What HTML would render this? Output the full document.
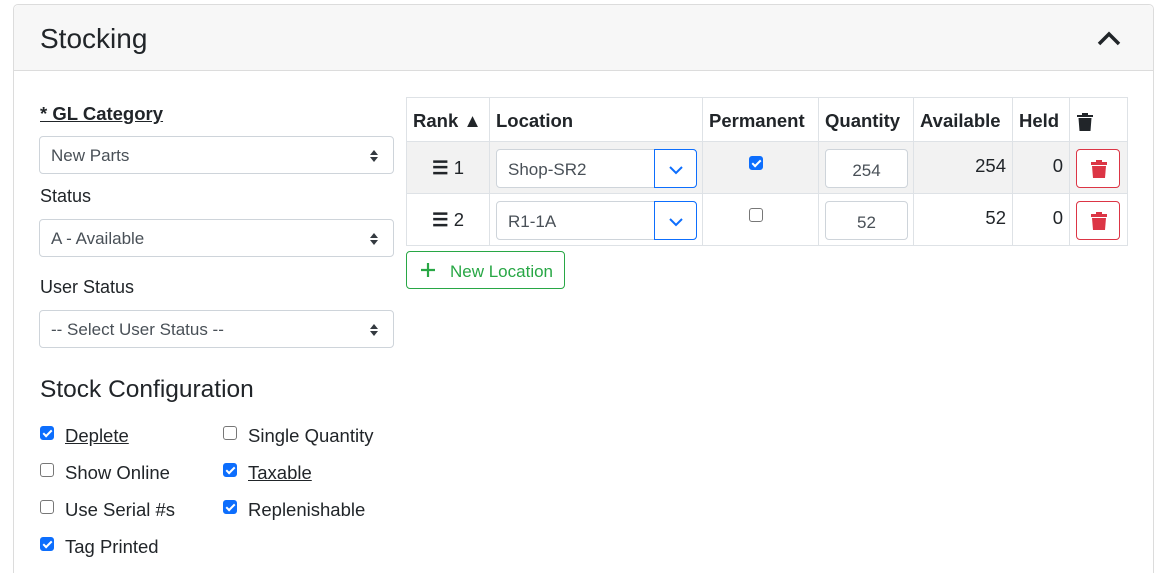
<!DOCTYPE html>
<html><head><style>
*{box-sizing:border-box;margin:0;padding:0}
html,body{width:1157px;height:573px;overflow:hidden}
body{background:#fff;font-family:"Liberation Sans",sans-serif;color:#212529;position:relative}
.a{position:absolute;white-space:nowrap}
.card{position:absolute;left:13px;top:4px;width:1141px;height:569px;border:1px solid #dcdcdc;border-bottom:none;border-radius:5px 5px 0 0}
.hdr{position:absolute;left:14px;top:5px;width:1139px;height:66px;background:#f7f7f7;border-bottom:1px solid #dcdcdc;border-radius:5px 5px 0 0}
.sel{position:absolute;left:39px;width:355px;height:38px;border:1px solid #ced4da;border-radius:4px;font-size:17px;color:#495057;padding:9px 11px}
.sel svg{position:absolute;right:14px;top:12px}
.lbl{font-size:18px}
.cb{position:absolute;width:14px;height:14px;border:1px solid #777;border-radius:3px;background:#fff}
.cb.on{background:#0d6efd;border-color:#0d6efd}
.cb.on::after{content:"";position:absolute;left:4px;top:1px;width:3px;height:7px;border:solid #fff;border-width:0 2px 2px 0;transform:rotate(45deg)}
.ck{font-size:18.5px}
table{position:absolute;left:406px;top:97px;border-collapse:collapse}
td,th{border:1px solid #dee2e6;font-size:18.5px;position:relative;padding:0}
th{height:44px;text-align:left;padding:2px 6px 0}
td{height:52px}
tr.r1 td{background:#f2f2f2}
.loc{position:absolute;left:6px;top:7px;width:201px;height:39px;border:1px solid #ced4da;border-radius:4px;background:#fff;font-size:17px;color:#495057;padding:10px 11px}
.loc .dd{position:absolute;right:-1px;top:-1px;width:43px;height:39px;border:1px solid #0d6efd;border-radius:0 4px 4px 0;background:#fff}
.qty{position:absolute;left:6px;top:7px;width:83px;height:39px;border:1px solid #ced4da;border-radius:4px;background:#fff;font-size:17px;color:#495057;text-align:center;padding-top:11px}
.del{position:absolute;left:6px;top:7px;width:44px;height:39px;border:1px solid #dc3545;border-radius:4px;background:#fff}
</style></head><body>
<div class="card"></div>
<div class="hdr"></div>
<div class="a" style="left:40px;top:23px;font-size:28px;">Stocking</div>
<svg class="a" style="left:1096px;top:30px" width="26" height="18" viewBox="0 0 26 18"><path d="M3 14 L13 4 L23 14" fill="none" stroke="#212529" stroke-width="3.5"/></svg>

<div class="a" style="left:40px;top:103px;font-size:18.5px;font-weight:bold;text-decoration:underline">* GL Category</div>
<div class="sel" style="top:136px">New Parts<svg width="10" height="14" viewBox="0 0 10 14"><path d="M1 6 L5 1 L9 6Z M1 8 L5 13 L9 8Z" fill="#343a40"/></svg></div>
<div class="a lbl" style="left:40px;top:186px">Status</div>
<div class="sel" style="top:219px">A - Available<svg width="10" height="14" viewBox="0 0 10 14"><path d="M1 6 L5 1 L9 6Z M1 8 L5 13 L9 8Z" fill="#343a40"/></svg></div>
<div class="a lbl" style="left:40px;top:277px">User Status</div>
<div class="sel" style="top:310px">-- Select User Status --<svg width="10" height="14" viewBox="0 0 10 14"><path d="M1 6 L5 1 L9 6Z M1 8 L5 13 L9 8Z" fill="#343a40"/></svg></div>
<div class="a" style="left:40px;top:376px;font-size:24.5px;font-weight:500">Stock Configuration</div>

<div class="cb on" style="left:40px;top:426px"></div><div class="a ck" style="left:65px;top:425px;text-decoration:underline">Deplete</div>
<div class="cb" style="left:40px;top:463px"></div><div class="a ck" style="left:65px;top:462px">Show Online</div>
<div class="cb" style="left:40px;top:500px"></div><div class="a ck" style="left:65px;top:499px">Use Serial #s</div>
<div class="cb on" style="left:40px;top:537px"></div><div class="a ck" style="left:65px;top:536px">Tag Printed</div>
<div class="cb" style="left:223px;top:426px"></div><div class="a ck" style="left:248px;top:425px">Single Quantity</div>
<div class="cb on" style="left:223px;top:463px"></div><div class="a ck" style="left:248px;top:462px;text-decoration:underline">Taxable</div>
<div class="cb on" style="left:223px;top:500px"></div><div class="a ck" style="left:248px;top:499px">Replenishable</div>

<table>
<tr><th style="width:83px">Rank ▲</th><th style="width:213px">Location</th><th style="width:116px">Permanent</th><th style="width:95px">Quantity</th><th style="width:99px">Available</th><th style="width:57px">Held</th><th style="width:58px"><svg width="18" height="20" viewBox="0 0 18 20" style="vertical-align:middle"><path d="M1 3h16v2H1z M6 1h6v2H6z M2.5 6h13l-1 13h-11z" fill="#212529"/></svg></th></tr>
<tr class="r1"><td style="text-align:center"><span style="font-weight:bold">☰</span> 1</td><td><div class="loc">Shop-SR2<div class="dd"><svg width="43" height="39" viewBox="0 0 43 39"><path d="M15 17 L21 23 L27 17" fill="none" stroke="#0d6efd" stroke-width="2"/></svg></div></div></td><td><div class="cb on" style="left:46px;top:14px"></div></td><td><div class="qty">254</div></td><td style="text-align:right;padding-right:6px;vertical-align:top;padding-top:13px">254</td><td style="text-align:right;padding-right:6px;vertical-align:top;padding-top:13px">0</td><td><div class="del"><svg width="44" height="39" viewBox="0 0 44 39"><path d="M14 12h16v3H14z M19 10h6v2h-6z M15 16h14l-1 12h-12z" fill="#dc3545"/></svg></div></td></tr>
<tr><td style="text-align:center"><span style="font-weight:bold">☰</span> 2</td><td><div class="loc">R1-1A<div class="dd"><svg width="43" height="39" viewBox="0 0 43 39"><path d="M15 17 L21 23 L27 17" fill="none" stroke="#0d6efd" stroke-width="2"/></svg></div></div></td><td><div class="cb" style="left:46px;top:14px"></div></td><td><div class="qty">52</div></td><td style="text-align:right;padding-right:6px;vertical-align:top;padding-top:13px">52</td><td style="text-align:right;padding-right:6px;vertical-align:top;padding-top:13px">0</td><td><div class="del"><svg width="44" height="39" viewBox="0 0 44 39"><path d="M14 12h16v3H14z M19 10h6v2h-6z M15 16h14l-1 12h-12z" fill="#dc3545"/></svg></div></td></tr>
</table>

<div class="a" style="left:406px;top:251px;width:159px;height:38px;border:1px solid #28a745;border-radius:4px;color:#28a745;font-size:17px;padding:10px 0 0 43px">New Location</div>
<svg class="a" style="left:419px;top:261px" width="18" height="18" viewBox="0 0 18 18"><path d="M9 2v14M2 9h14" stroke="#28a745" stroke-width="2.2"/></svg>
</body></html>
